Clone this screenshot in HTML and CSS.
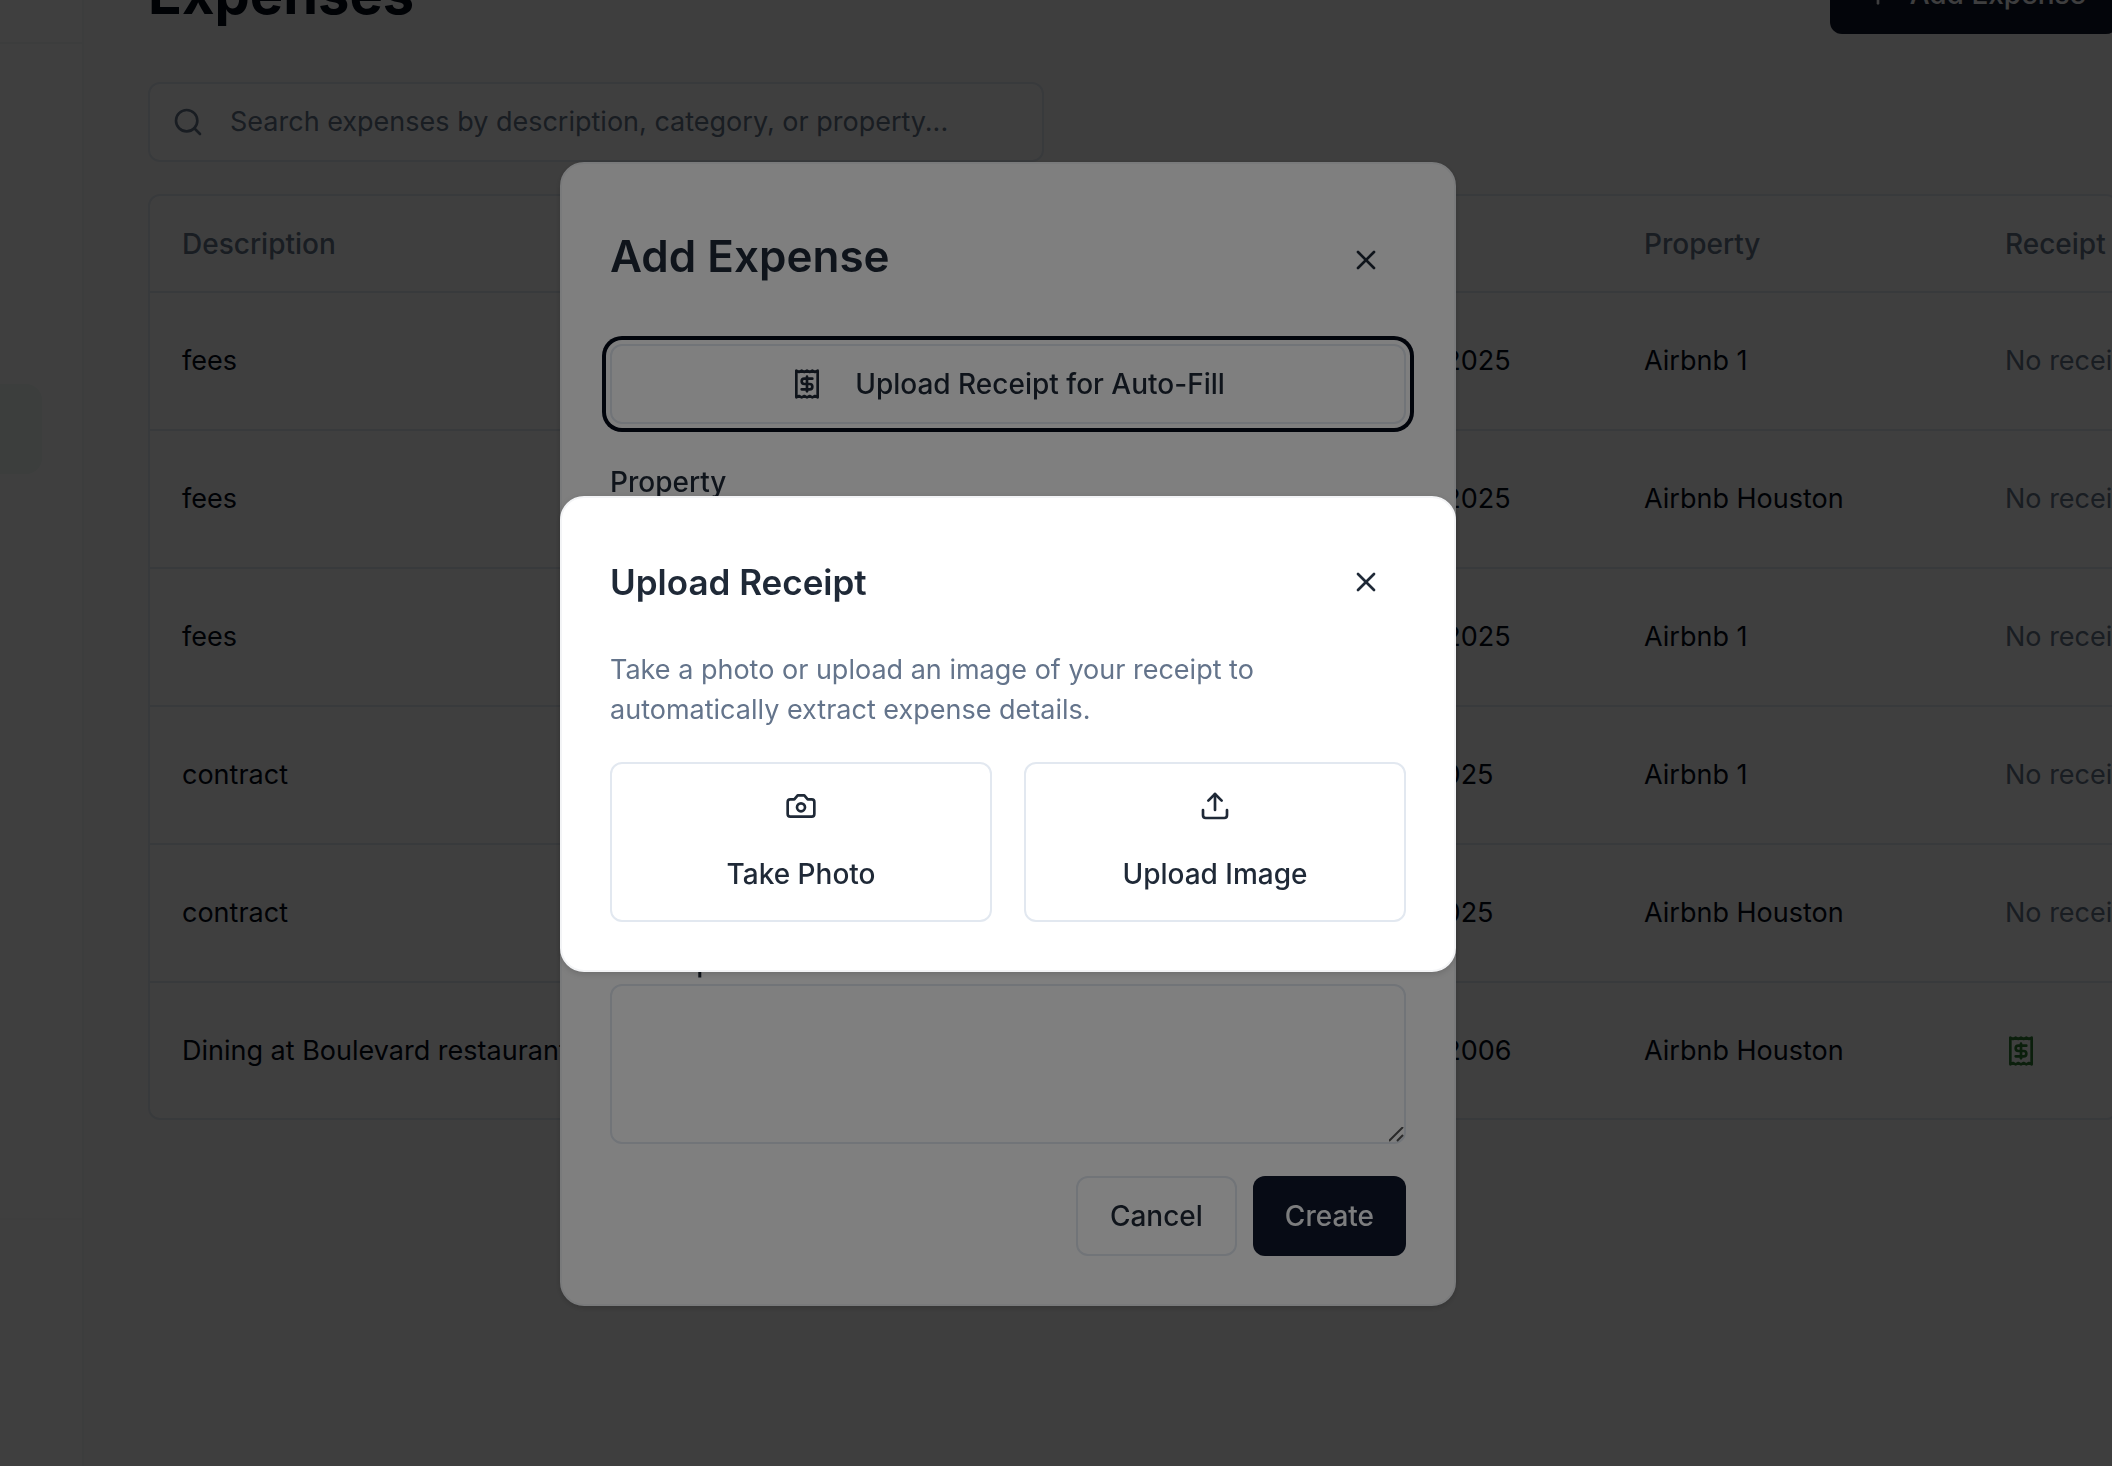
FILE: index.html
```html
<!DOCTYPE html>
<html lang="en">
<head>
  <meta charset="UTF-8" />
  <meta name="viewport" content="width=device-width, initial-scale=1" />
  <title>Expenses</title>
  <link rel="stylesheet" href="styles.css">
</head>
<body>
  <!-- shared icons -->
  <svg class="sprite" aria-hidden="true">
    <symbol id="icon-receipt" viewBox="0 0 24 24">
      <path d="M4 2v20l2-1 2 1 2-1 2 1 2-1 2 1 2-1 2 1V2l-2 1-2-1-2 1-2-1-2 1-2-1-2 1Z" />
      <path d="M16 8h-6a2 2 0 1 0 0 4h4a2 2 0 1 1 0 4H8" />
      <path d="M12 17.5v-11" />
    </symbol>
    <symbol id="icon-close" viewBox="0 0 24 24">
      <path d="M18 6 6 18" />
      <path d="m6 6 12 12" />
    </symbol>
  </svg>

  <div class="page">
    <aside class="sidebar">
      <div class="sidebar-top"></div>
      <nav class="sidebar-nav">
        <a class="nav-active" href="#" aria-label="Expenses"></a>
      </nav>
    </aside>

    <main class="main">
      <header class="page-header">
        <h1>Expenses</h1>
        <button class="btn btn-primary btn-add" type="button">
          <svg class="icon" viewBox="0 0 24 24"><path d="M5 12h14" /><path d="M12 5v14" /></svg>
          Add Expense
        </button>
      </header>

      <div class="search">
        <svg class="icon" viewBox="0 0 24 24"><circle cx="11" cy="11" r="8" /><path d="m21 21-4.3-4.3" /></svg>
        <input type="search" aria-label="Search expenses" placeholder="Search expenses by description, category, or property..." />
      </div>

      <div class="table-wrap">
        <table>
          <colgroup>
            <col class="col-description" />
            <col class="col-date" />
            <col class="col-property" />
            <col class="col-receipt" />
          </colgroup>
          <thead>
            <tr><th>Description</th><th>Date</th><th>Property</th><th>Receipt</th></tr>
          </thead>
          <tbody>
            <tr><td>fees</td><td>8/10/2025</td><td>Airbnb 1</td><td class="muted">No receipt</td></tr>
            <tr><td>fees</td><td>8/10/2025</td><td>Airbnb Houston</td><td class="muted">No receipt</td></tr>
            <tr><td>fees</td><td>8/10/2025</td><td>Airbnb 1</td><td class="muted">No receipt</td></tr>
            <tr><td>contract</td><td>8/1/2025</td><td>Airbnb 1</td><td class="muted">No receipt</td></tr>
            <tr><td>contract</td><td>8/1/2025</td><td>Airbnb Houston</td><td class="muted">No receipt</td></tr>
            <tr>
              <td>Dining at Boulevard restaurant</td>
              <td>9/10/2006</td>
              <td>Airbnb Houston</td>
              <td><svg class="icon icon-green"><use href="#icon-receipt" /></svg></td>
            </tr>
          </tbody>
        </table>
      </div>
    </main>
  </div>

  <div class="overlay">
    <section class="dialog" role="dialog" aria-labelledby="expense-title">
      <header class="dialog-header dialog-header-large">
        <h2 id="expense-title">Add Expense</h2>
        <button class="btn btn-ghost" type="button" aria-label="Close"><svg class="icon"><use href="#icon-close" /></svg></button>
      </header>
      <form>
        <div class="fields">
          <button class="btn btn-outline btn-focus" type="button">
            <svg class="icon"><use href="#icon-receipt" /></svg>
            Upload Receipt for Auto-Fill
          </button>
          <div class="field">
            <label for="property">Property</label>
            <select id="property"><option></option></select>
          </div>
          <div class="field">
            <label for="amount">Amount</label>
            <input id="amount" type="text" />
          </div>
          <div class="field">
            <label for="date">Date</label>
            <input id="date" type="text" />
          </div>
          <div class="field">
            <label for="description">Description</label>
            <textarea id="description"></textarea>
          </div>
        </div>
        <div class="actions">
          <button class="btn btn-outline" type="button">Cancel</button>
          <button class="btn btn-primary" type="submit">Create</button>
        </div>
      </form>
    </section>
  </div>

  <div class="overlay">
    <section class="dialog" role="dialog" aria-labelledby="upload-title">
      <header class="dialog-header">
        <h3 id="upload-title">Upload Receipt</h3>
        <button class="btn btn-ghost" type="button" aria-label="Close"><svg class="icon"><use href="#icon-close" /></svg></button>
      </header>
      <p class="dialog-text">Take a photo or upload an image of your receipt to automatically extract expense details.</p>
      <div class="choices">
        <button class="btn btn-outline btn-tile" type="button">
          <svg class="icon" viewBox="0 0 24 24">
            <path d="M14.5 4h-5L7 7H4a2 2 0 0 0-2 2v9a2 2 0 0 0 2 2h16a2 2 0 0 0 2-2V9a2 2 0 0 0-2-2h-3l-2.5-3z" />
            <circle cx="12" cy="13" r="3" />
          </svg>
          Take Photo
        </button>
        <button class="btn btn-outline btn-tile" type="button">
          <svg class="icon" viewBox="0 0 24 24">
            <path d="M21 15v4a2 2 0 0 1-2 2H5a2 2 0 0 1-2-2v-4" />
            <path d="m17 8-5-5-5 5" />
            <path d="M12 3v12" />
          </svg>
          Upload Image
        </button>
      </div>
    </section>
  </div>
</body>
</html>
```

FILE: styles.css
```css
* {
  margin: 0;
  padding: 0;
  box-sizing: border-box;
}
body {
  height: 100vh;
  overflow: hidden;
  background: #fafafa;
  color: #020817;
  font-family: Inter, sans-serif;
  font-size: 27px;
  line-height: 40px;
}
button,
input,
select,
textarea {
  font: inherit;
  color: inherit;
}
.sprite {
  display: none;
}
.icon {
  display: block;
  flex: none;
  width: 32px;
  height: 32px;
  fill: none;
  stroke: currentColor;
  stroke-width: 2;
  stroke-linecap: round;
  stroke-linejoin: round;
}
.icon-green {
  color: #2e7d32;
}

/* page */
.page {
  display: flex;
  min-height: 100vh;
}
.sidebar {
  flex: none;
  width: 84px;
  background: #fff;
  border-right: 2px solid #f3f4f6;
}
.sidebar-top {
  height: 44px;
  border-bottom: 2px solid #f3f4f6;
}
.sidebar-nav {
  height: 1176px;
  padding-top: 340px;
  border-bottom: 2px solid #fafafa;
}
.nav-active {
  display: block;
  width: 42px;
  height: 90px;
  border-radius: 0 16px 16px 0;
  background: #f0f9f5;
}
/* the page is scrolled: the header row is partly above the window */
.main {
  flex: 1;
  min-width: 0;
  margin: -46px -6px 0 0;
  padding-left: 64px;
}
.page-header {
  display: flex;
  justify-content: space-between;
  align-items: center;
  height: 80px;
  margin-bottom: 48px;
}
h1 {
  font-size: 56px;
  line-height: 72px;
  font-weight: 700;
}
.search {
  display: flex;
  align-items: center;
  gap: 26px;
  max-width: 896px;
  height: 80px;
  margin-bottom: 32px;
  padding: 0 22px;
  border: 2px solid #e2e8f0;
  border-radius: 12px;
  background: #fff;
  color: #64748b;
}
.search input {
  flex: 1;
  min-width: 0;
  border: 0;
  outline: none;
  background: none;
}
.search input::placeholder {
  color: #64748b;
  opacity: 1;
}
.table-wrap {
  overflow: hidden;
  border: 2px solid #e2e8f0;
  border-radius: 12px;
  background: #fff;
}
table {
  width: 100%;
  table-layout: fixed;
  border-collapse: collapse;
}
.col-description {
  width: 1198px;
}
.col-date {
  width: 264px;
}
.col-property {
  width: 361px;
}
th,
td {
  height: 138px;
  padding: 0 32px;
  text-align: left;
  white-space: nowrap;
  border-bottom: 2px solid #e2e8f0;
}
th {
  height: 96px;
  font-size: 28px;
  font-weight: 500;
  color: #64748b;
}
tr:last-child td {
  height: 136px;
  border-bottom: 0;
}
.muted {
  color: #64748b;
}

/* buttons */
.btn {
  display: flex;
  justify-content: center;
  align-items: center;
  gap: 32px;
  height: 80px;
  padding: 0 32px;
  border: 0;
  border-radius: 12px;
  background: #fff;
  font-size: 28px;
  font-weight: 500;
  cursor: pointer;
}
.btn-primary {
  background: #0f172a;
  color: #f8fafc;
}
.btn-add {
  gap: 16px;
}
.btn-outline {
  border: 2px solid #e2e8f0;
}
.btn-ghost {
  height: 72px;
  padding: 0 24px;
}
.btn-focus {
  box-shadow: 0 0 0 4px #fff, 0 0 0 8px #020817;
}
.btn-tile {
  flex: 1;
  flex-direction: column;
  height: 160px;
}

/* dialogs */
.overlay {
  position: fixed;
  inset: 0;
  display: flex;
  justify-content: center;
  align-items: center;
  padding: 2px 96px 0 0;
  background: rgba(0, 0, 0, 0.5);
}
.dialog {
  width: 896px;
  padding: 48px;
  border: 2px solid #f3f4f6;
  border-radius: 24px;
  background: #fff;
  color: #1f2937;
  box-shadow: 0 2px 6px rgba(0, 0, 0, 0.15);
}
.dialog-header {
  display: flex;
  justify-content: space-between;
  align-items: center;
  margin-bottom: 32px;
}
.dialog-header-large {
  height: 96px;
  margin-bottom: 36px;
}
h2 {
  padding-bottom: 8px;
  font-size: 44px;
  line-height: 48px;
  font-weight: 600;
}
h3 {
  font-size: 35px;
  line-height: 40px;
  font-weight: 600;
}
.dialog-text {
  margin-bottom: 32px;
  color: #64748b;
}
.choices {
  display: flex;
  gap: 32px;
}
.fields {
  display: flex;
  flex-direction: column;
  gap: 38px;
}
.field {
  display: flex;
  flex-direction: column;
  gap: 2px;
}
.field label {
  font-size: 28px;
  font-weight: 500;
}
.field input,
.field select,
.field textarea {
  width: 100%;
  height: 80px;
  padding: 0 24px;
  border: 2px solid #e2e8f0;
  border-radius: 12px;
  background: #fff;
}
.field textarea {
  display: block;
  height: 160px;
  padding: 16px 24px;
  resize: vertical;
}
.field textarea::-webkit-resizer {
  background: url("data:image/svg+xml,%3Csvg xmlns='http://www.w3.org/2000/svg' viewBox='0 0 15 15'%3E%3Cpath d='M0 14 14 0M8 14l6-6' stroke='%23555' stroke-width='2'/%3E%3C/svg%3E") no-repeat center;
}
.actions {
  display: flex;
  justify-content: flex-end;
  gap: 16px;
  margin-top: 32px;
}
```
